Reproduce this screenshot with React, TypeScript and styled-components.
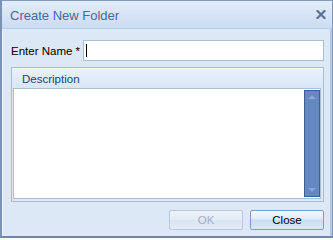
import React from 'react'
import styled, { createGlobalStyle } from 'styled-components';

const GlobalStyle = createGlobalStyle`
    html, body {
        margin: 0;
        padding: 0;
        background: #ffffff;
    }
    body {
        font-family: "Liberation Sans", Arial, sans-serif;
    }
`;

export default function App() {
  return (
    <>
      <GlobalStyle />
      <Window>
        <TitleBar>
          <Title>Create New Folder</Title>
          <CloseX aria-label="close">
            <svg width="10" height="9" viewBox="0 0 10 9">
              <path d="M1.5 1 L8.5 8 M8.5 1 L1.5 8" stroke="#5a7298" strokeWidth="2.2" strokeLinecap="square" />
            </svg>
          </CloseX>
        </TitleBar>
        <Body>
          <NameRow>
            <Label>Enter Name *</Label>
            <NameInput>
              <Caret />
            </NameInput>
          </NameRow>
          <Group>
            <GroupHeader>Description</GroupHeader>
            <TextArea>
              <TextSpace />
              <ScrollBar>
                <Arrow $up />
                <Arrow />
              </ScrollBar>
            </TextArea>
          </Group>
          <ButtonRow>
            <Button $disabled>OK</Button>
            <Button>Close</Button>
          </ButtonRow>
        </Body>
      </Window>
    </>
  )
}

const Window = styled.div`
    width: 333px;
    height: 238px;
    box-sizing: border-box;
    border: 1px solid #8199bb;
    border-left: 2px solid #7c92b4;
    border-bottom: 2px solid #6f86a8;
    background: #dde8f7;
    display: flex;
    flex-direction: column;
`;
const TitleBar = styled.div`
    height: 28px;
    box-sizing: border-box;
    display: flex;
    align-items: center;
    justify-content: space-between;
    padding: 0 5px 0 8px;
    background: linear-gradient(to bottom, #e4edf9 0%, #d8e5f6 45%, #cbdcf2 100%);
    border-bottom: 1px solid #b9cde8;
`;
const Title = styled.span`
    font-size: 13px;
    color: #4a6a9b;
    padding-top: 1px;
`;
const CloseX = styled.span`
    display: flex;
    width: 12px;
    justify-content: center;
`;
const Body = styled.div`
    flex: 1;
    display: flex;
    flex-direction: column;
    padding: 11px 6px 0 8px;
    border-left: 1px solid #eef4fc;
    border-right: 2px solid #b3c7e3;
`;
const NameRow = styled.div`
    display: flex;
    align-items: center;
    height: 21px;
`;
const Label = styled.span`
    font-size: 11.5px;
    color: #000;
    width: 72px;
`;
const NameInput = styled.div`
    flex: 1;
    height: 21px;
    box-sizing: border-box;
    background: #fff;
    border: 1px solid #a9bfd6;
    display: flex;
    align-items: center;
    padding-left: 2px;
`;
const Caret = styled.span`
    width: 1px;
    height: 13px;
    background: #000;
`;
const Group = styled.div`
    margin-top: 6px;
    height: 135px;
    box-sizing: border-box;
    border: 1px solid #a6bcd9;
    display: flex;
    flex-direction: column;
`;
const GroupHeader = styled.div`
    height: 20px;
    box-sizing: border-box;
    padding-left: 10px;
    display: flex;
    align-items: center;
    font-size: 11.5px;
    color: #1e3f74;
    background: linear-gradient(to bottom, #eaf1fb, #dae6f6);
    border-top: 1px solid #f5f9fe;
`;
const TextArea = styled.div`
    flex: 1;
    margin: 0 2px 2px 1px;
    background: #fff;
    border: 1px solid #a9bfd6;
    display: flex;
`;
const TextSpace = styled.div`
    flex: 1;
`;
const ScrollBar = styled.div`
    width: 16px;
    margin: 1px 0 1px 0;
    box-sizing: border-box;
    background: #6688c0;
    border: 1px solid #3f5f93;
    display: flex;
    flex-direction: column;
    justify-content: space-between;
    align-items: center;
    padding: 4px 0;
`;
const Arrow = styled.span<{ $up?: boolean }>`
    width: 0;
    height: 0;
    border-left: 4px solid transparent;
    border-right: 4px solid transparent;
    ${p => p.$up ? 'border-bottom: 4px solid #8aa6d4;' : 'border-top: 4px solid #8aa6d4;'}
`;
const ButtonRow = styled.div`
    display: flex;
    justify-content: flex-end;
    gap: 7px;
    margin-top: 8px;
`;
const Button = styled.div<{ $disabled?: boolean }>`
    width: 74px;
    height: 20px;
    box-sizing: border-box;
    border-radius: 2px;
    display: flex;
    align-items: center;
    justify-content: center;
    font-size: 11.5px;
    color: ${p => p.$disabled ? '#a3afbf' : '#000'};
    border: 1px solid ${p => p.$disabled ? '#b8c8dd' : '#7d9cc7'};
    background: ${p => p.$disabled
        ? 'linear-gradient(to bottom, #eef3fa 0%, #e3ebf6 50%, #d9e4f3 51%, #e3ebf6 100%)'
        : 'linear-gradient(to bottom, #f3f7fd 0%, #e3edfa 45%, #c9dcf4 50%, #dbe8f8 100%)'};
`;
